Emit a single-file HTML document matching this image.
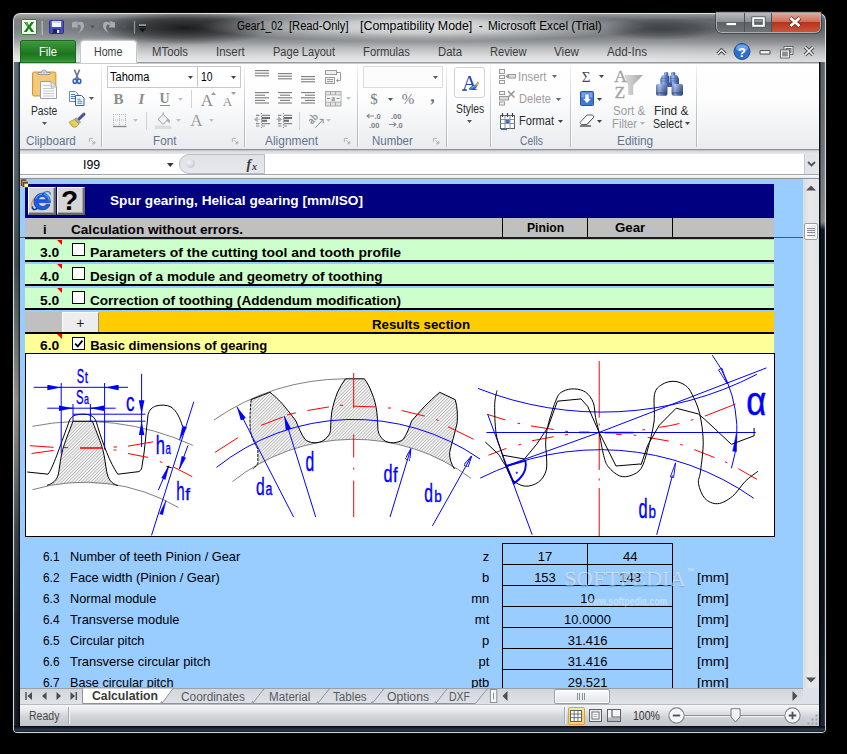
<!DOCTYPE html>
<html>
<head>
<meta charset="utf-8">
<title>Gear1_02 - Microsoft Excel</title>
<style>
*{box-sizing:border-box;margin:0;padding:0}
html,body{width:847px;height:754px;background:#000;overflow:hidden}
body{font-family:"Liberation Sans",sans-serif;font-size:12px;color:#000;position:relative}
.abs{position:absolute}
.t{position:absolute;white-space:pre;line-height:1;transform-origin:0 50%}
svg{position:absolute;overflow:visible}
</style>
</head>
<body>

<div class="abs" style="left:13px;top:13px;width:813px;height:720px;border-radius:7px 7px 4px 4px;
 background:
  radial-gradient(ellipse 225px 15px at 410px 13.5px, rgba(255,255,255,.82) 0%, rgba(255,255,255,.62) 45%, rgba(255,255,255,0) 100%),
  radial-gradient(ellipse 88px 17px at 172px 15px, rgba(0,0,0,.74) 0%, rgba(0,0,0,.42) 55%, rgba(0,0,0,0) 100%),
  radial-gradient(ellipse 62px 11px at 648px 16px, rgba(20,24,28,.5) 0%, rgba(20,24,28,.28) 60%, rgba(0,0,0,0) 100%),
  linear-gradient(to right, rgba(255,255,255,.16) 0px, rgba(255,255,255,.12) 60px, rgba(255,255,255,0) 125px, rgba(0,0,0,0) 600px, rgba(0,0,0,.06) 813px),
  linear-gradient(to bottom, #a4a8aa 0px, #858a8e 3px, #666b70 7px, #676c70 16px, #7d8184 24px, #94979a 29px, #b9bbbd 35px, #d6d7d9 42px, #eaeaeb 49px, #46494c 50px, #1c1e20 100%);
 box-shadow: inset 0 0 0 1px rgba(235,240,242,.85), 0 0 0 1px #0c0c0c;"></div>
<div class="abs" style="left:14px;top:62px;width:6px;height:665px;background:
      linear-gradient(to right, rgba(255,255,255,.12) 0, rgba(0,0,0,0) 2px, rgba(0,0,0,0) 4px, rgba(0,0,0,.55) 5px, rgba(0,0,0,.7) 6px),
      linear-gradient(to bottom,#54686f 0px,#4a5d64 120px,#3a484e 200px,#6d7574 290px,#8f8d86 340px,#6e7070 400px,#384246 470px,#1b2024 560px,#14181c 665px);"></div>
<div class="abs" style="left:819px;top:62px;width:6px;height:665px;background:
      linear-gradient(to right, rgba(0,0,0,.85) 0, rgba(0,0,0,.85) 1.2px, rgba(0,0,0,0) 1.8px, rgba(0,0,0,0) 5px, rgba(255,255,255,.25) 6px),
      linear-gradient(to bottom,#5c6168 0px,#6f747a 100px,#80858a 160px,#0b1220 168px,#0a101a 560px,#1a2636 665px);"></div>
<div class="abs" style="left:14px;top:726px;width:811px;height:6px;border-radius:0 0 3px 3px;background:
      linear-gradient(to bottom,#05070a 0,#18222e 2px,#2a3a4c 4px,#141c26 6px);"></div>
<div class="t" style="left:236.80px;top:19.84px;font-size:12px;color:#000;transform:scaleX(0.8546);">Gear1_02</div>
<div class="t" style="left:289.20px;top:19.84px;font-size:12px;color:#000;transform:scaleX(0.9295);">[Read-Only]</div>
<div class="t" style="left:360.10px;top:19.84px;font-size:12px;color:#000;transform:scaleX(1.0331);">[Compatibility Mode]</div>
<div class="t" style="left:488.30px;top:19.84px;font-size:12px;color:#000;transform:scaleX(0.9838);">Microsoft Excel (Trial)</div>
<div class="t" style="left:478.80px;top:19.84px;font-size:12px;color:#000;">-</div>
<svg style="left:21px;top:19px" width="16" height="16" viewBox="0 0 16 16">
<rect x="0.5" y="0.5" width="15" height="15" rx="1.5" fill="#eef5ea" stroke="#3b7a3b"/>
<rect x="1.5" y="1.5" width="13" height="13" fill="none" stroke="#fff" stroke-opacity=".7"/>
<path d="M3 3 L6 3 L8 6.3 L10.2 3 L13 3 L9.6 8 L13.2 13 L10.2 13 L8 9.6 L5.8 13 L2.8 13 L6.4 8 Z" fill="#1e7b1e"/>
<path d="M3 3 L6 3 L8 6.3 L6.4 8 Z" fill="#4aa84a"/>
</svg>
<div class="abs" style="left:41px;top:21px;width:1px;height:14px;background:#9aa0a4;"></div>
<div class="abs" style="left:42px;top:21px;width:1px;height:14px;background:rgba(255,255,255,.35);"></div>
<svg style="left:48.6px;top:20.2px" width="15" height="14" viewBox="0 0 16 15">
<rect x="0.5" y="0.5" width="15" height="14" rx="1" fill="#4a50b8" stroke="#2a2f86"/>
<rect x="3" y="1" width="10" height="6.5" fill="#f4f6fb"/>
<rect x="3" y="1" width="10" height="2" fill="#c9d0ea"/>
<rect x="4" y="9.5" width="8" height="5" fill="#20245c"/>
<rect x="8.5" y="10.5" width="2.5" height="3.5" fill="#dfe3f5"/>
</svg>
<svg style="left:71px;top:19px" width="80" height="18" viewBox="0 0 80 18">
<g fill="#a9adb0">
<path d="M1 3.4 L6.6 2 L5.2 5 C 7 2.2, 12.6 1.6, 13 6.6 C 13.2 9.6, 10.6 12.4, 7.4 14 C 9.6 11.4, 10.4 9, 9.6 6.8 C 8.8 5, 7.2 5.2, 6.2 6.4 L 7.4 8.4 L 1 8.6 Z"/>
<path d="M44 3.4 L38.4 2 L39.8 5 C 38 2.2, 32.4 1.6, 32 6.6 C 31.8 9.6, 34.4 12.4, 37.6 14 C 35.4 11.4, 34.6 9, 35.4 6.8 C 36.2 5, 37.8 5.2, 38.8 6.4 L 37.6 8.4 L 44 8.6 Z"/>
</g>
<path d="M18.6 6.4 L24.2 6.4 L21.4 9.6 Z" fill="#53585c"/>
<path d="M50.6 6.4 L56.2 6.4 L53.4 9.6 Z" fill="#53585c"/>
<rect x="62.4" y="1.6" width="2.2" height="13.6" rx="1" fill="#8d9296" stroke="#3e4347" stroke-width=".8"/>
<rect x="68" y="5.6" width="7" height="1.2" fill="#e6e8ea"/><rect x="68" y="6.8" width="7" height="1.3" fill="#0c0e10"/>
<path d="M68 9.4 H75 L71.5 12.9 Z" fill="#0c0e10"/>
</svg>
<div class="abs" style="left:717px;top:13px;width:103px;height:19px;border-radius:0 0 5px 5px;box-shadow:0 0 0 1px rgba(255,255,255,.55), 0 0 0 2px rgba(40,44,48,.55);overflow:hidden">
<div class="abs" style="left:0;top:0;width:28px;height:19px;background:linear-gradient(to bottom,#b9bcbf 0,#8f9397 45%,#5d6266 50%,#6e7377 100%);border-right:1px solid #4d5155"></div>
<div class="abs" style="left:28px;top:0;width:27px;height:19px;background:linear-gradient(to bottom,#b9bcbf 0,#8f9397 45%,#5d6266 50%,#6e7377 100%);border-right:1px solid #4d5155"></div>
<div class="abs" style="left:55px;top:0;width:48px;height:19px;background:linear-gradient(to bottom,#e3a99c 0,#d0705c 45%,#b8331a 50%,#c9553a 100%)"></div>
</div>
<svg style="left:717px;top:13px" width="103" height="19" viewBox="0 0 103 19">
<rect x="9" y="9.5" width="10.5" height="3.2" fill="#fff" stroke="#53575b" stroke-width=".8"/>
<rect x="36.2" y="5.2" width="10.6" height="7.6" fill="none" stroke="#53575b" stroke-width="3.6"/>
<rect x="36.2" y="5.2" width="10.6" height="7.6" fill="none" stroke="#fff" stroke-width="2"/>
<g stroke-linecap="butt"><path d="M73.2 4.8 L82.8 13.2 M82.8 4.8 L73.2 13.2" stroke="#6b2a1c" stroke-width="4.4"/>
<path d="M73.5 5 L82.5 13 M82.5 5 L73.5 13" stroke="#fff" stroke-width="2.8"/></g>
</svg>
<div class="abs" style="left:20px;top:40px;width:56px;height:23px;border-radius:3px 3px 0 0;
      background:linear-gradient(to bottom,#3f9a3f 0,#2f8a2f 30%,#1f741f 60%,#2c8a2c 85%,#4aa84a 100%);
      box-shadow:inset 0 0 0 1px #1b6a1b, inset 0 2px 1px -1px rgba(255,255,255,.45)"></div>
<div class="t" style="left:39.20px;top:45.84px;font-size:12px;color:#fff;transform:scaleX(0.9305);">File</div>
<div class="abs" style="left:81px;top:41px;width:55px;height:22px;border-radius:3px 3px 0 0;background:linear-gradient(to bottom,#fdfdfd,#fff);
      box-shadow:0 0 0 1px #c3c6ca, 0 0 4px rgba(255,255,255,.8)"></div>
<div class="t" style="left:93.80px;top:45.84px;font-size:12px;color:#3c3c3c;transform:scaleX(0.8871);">Home</div>
<div class="t" style="left:151.70px;top:45.84px;font-size:12px;color:#3c3c3c;transform:scaleX(0.9470);">MTools</div>
<div class="t" style="left:215.80px;top:45.84px;font-size:12px;color:#3c3c3c;transform:scaleX(0.9567);">Insert</div>
<div class="t" style="left:273.00px;top:45.84px;font-size:12px;color:#3c3c3c;transform:scaleX(0.9204);">Page Layout</div>
<div class="t" style="left:363.00px;top:45.84px;font-size:12px;color:#3c3c3c;transform:scaleX(0.9397);">Formulas</div>
<div class="t" style="left:438.00px;top:45.84px;font-size:12px;color:#3c3c3c;transform:scaleX(0.9470);">Data</div>
<div class="t" style="left:490.00px;top:45.84px;font-size:12px;color:#3c3c3c;transform:scaleX(0.9274);">Review</div>
<div class="t" style="left:554.00px;top:45.84px;font-size:12px;color:#3c3c3c;transform:scaleX(0.9691);">View</div>
<div class="t" style="left:607.00px;top:45.84px;font-size:12px;color:#3c3c3c;transform:scaleX(0.9675);">Add-Ins</div>
<svg style="left:714px;top:42px" width="106" height="20" viewBox="0 0 106 20">
<path d="M3.5 12 L7.5 8 L11.5 12" fill="none" stroke="#3a3d40" stroke-width="3.2"/>
<path d="M3.5 12 L7.5 8 L11.5 12" fill="none" stroke="#f4f4f4" stroke-width="1.4"/>
<circle cx="28" cy="9.5" r="8" fill="#2f6fc9" stroke="#1d4f9c" stroke-width="1"/>
<ellipse cx="28" cy="6" rx="6" ry="3.6" fill="#7fb0ee" opacity=".75"/>
<path d="M46 8.6 h10 v3.4 h-10 z" fill="#f4f4f4" stroke="#4b4f53" stroke-width="1"/>
<rect x="71" y="5.5" width="7" height="6" fill="none" stroke="#4b4f53" stroke-width="2.8"/>
<rect x="71" y="5.5" width="7" height="6" fill="none" stroke="#f4f4f4" stroke-width="1.2"/>
<rect x="67.5" y="9" width="7" height="6" fill="#999" stroke="#4b4f53" stroke-width="2.8"/>
<rect x="67.5" y="9" width="7" height="6" fill="#8a8d90" stroke="#f4f4f4" stroke-width="1.2"/>
<path d="M91 5 L99 13 M99 5 L91 13" stroke="#4b4f53" stroke-width="3.6"/>
<path d="M91 5 L99 13 M99 5 L91 13" stroke="#f4f4f4" stroke-width="1.7"/>
</svg>
<div class="t" style="left:738.03px;top:46.00px;font-size:13px;color:#fff;font-weight:bold;">?</div>
<div class="abs" style="left:20px;top:63px;width:799px;height:87px;background:linear-gradient(to bottom,#ffffff 0,#fdfdfe 40%,#f1f3f5 75%,#e9ebee 100%);border-bottom:1px solid #8e9297;border-top:1px solid #c9ccd0"></div>
<div class="abs" style="left:20px;top:150px;width:799px;height:4px;background:linear-gradient(to bottom,#b8bbbf,#d9dbde 40%,#e6e8eb);"></div>
<div class="abs" style="left:101px;top:66px;width:1px;height:81px;background:linear-gradient(to bottom,rgba(190,194,200,.2),#c4c8ce 50%,#b4b8be);"></div>
<div class="abs" style="left:102px;top:66px;width:1px;height:81px;background:rgba(255,255,255,.9);"></div>
<div class="abs" style="left:244px;top:66px;width:1px;height:81px;background:linear-gradient(to bottom,rgba(190,194,200,.2),#c4c8ce 50%,#b4b8be);"></div>
<div class="abs" style="left:245px;top:66px;width:1px;height:81px;background:rgba(255,255,255,.9);"></div>
<div class="abs" style="left:357px;top:66px;width:1px;height:81px;background:linear-gradient(to bottom,rgba(190,194,200,.2),#c4c8ce 50%,#b4b8be);"></div>
<div class="abs" style="left:358px;top:66px;width:1px;height:81px;background:rgba(255,255,255,.9);"></div>
<div class="abs" style="left:446px;top:66px;width:1px;height:81px;background:linear-gradient(to bottom,rgba(190,194,200,.2),#c4c8ce 50%,#b4b8be);"></div>
<div class="abs" style="left:447px;top:66px;width:1px;height:81px;background:rgba(255,255,255,.9);"></div>
<div class="abs" style="left:490px;top:66px;width:1px;height:81px;background:linear-gradient(to bottom,rgba(190,194,200,.2),#c4c8ce 50%,#b4b8be);"></div>
<div class="abs" style="left:491px;top:66px;width:1px;height:81px;background:rgba(255,255,255,.9);"></div>
<div class="abs" style="left:570px;top:66px;width:1px;height:81px;background:linear-gradient(to bottom,rgba(190,194,200,.2),#c4c8ce 50%,#b4b8be);"></div>
<div class="abs" style="left:571px;top:66px;width:1px;height:81px;background:rgba(255,255,255,.9);"></div>
<div class="abs" style="left:696px;top:66px;width:1px;height:81px;background:linear-gradient(to bottom,rgba(190,194,200,.2),#c4c8ce 50%,#b4b8be);"></div>
<div class="abs" style="left:697px;top:66px;width:1px;height:81px;background:rgba(255,255,255,.9);"></div>
<div class="t" style="left:25.70px;top:134.84px;font-size:12px;color:#66728c;transform:scaleX(0.9693);">Clipboard</div>
<div class="t" style="left:152.60px;top:134.84px;font-size:12px;color:#66728c;transform:scaleX(0.9750);">Font</div>
<div class="t" style="left:265.00px;top:134.84px;font-size:12px;color:#66728c;transform:scaleX(0.9933);">Alignment</div>
<div class="t" style="left:372.35px;top:134.84px;font-size:12px;color:#66728c;transform:scaleX(0.9534);">Number</div>
<div class="t" style="left:519.80px;top:134.84px;font-size:12px;color:#66728c;transform:scaleX(0.8618);">Cells</div>
<div class="t" style="left:616.50px;top:134.84px;font-size:12px;color:#66728c;transform:scaleX(0.9867);">Editing</div>
<svg style="left:89.4px;top:138.3px" width="6.6" height="6.6" viewBox="0 0 8 8"><path d="M0.5 5 V0.5 H5" fill="none" stroke="#a8acb2"/><path d="M3 3 L7 7 M7 3.8 V7 H3.8" fill="none" stroke="#a8acb2" stroke-width="1.1"/></svg>
<svg style="left:232.4px;top:138.3px" width="6.6" height="6.6" viewBox="0 0 8 8"><path d="M0.5 5 V0.5 H5" fill="none" stroke="#a8acb2"/><path d="M3 3 L7 7 M7 3.8 V7 H3.8" fill="none" stroke="#a8acb2" stroke-width="1.1"/></svg>
<svg style="left:344.4px;top:138.3px" width="6.6" height="6.6" viewBox="0 0 8 8"><path d="M0.5 5 V0.5 H5" fill="none" stroke="#a8acb2"/><path d="M3 3 L7 7 M7 3.8 V7 H3.8" fill="none" stroke="#a8acb2" stroke-width="1.1"/></svg>
<svg style="left:433.4px;top:138.3px" width="6.6" height="6.6" viewBox="0 0 8 8"><path d="M0.5 5 V0.5 H5" fill="none" stroke="#a8acb2"/><path d="M3 3 L7 7 M7 3.8 V7 H3.8" fill="none" stroke="#a8acb2" stroke-width="1.1"/></svg>
<svg style="left:31px;top:69px" width="30" height="32" viewBox="0 0 30 32">
<rect x="1.5" y="3" width="23.4" height="24" rx="1.5" fill="#f0c266" stroke="#c99a3c"/>
<rect x="3" y="4.5" width="20.4" height="21" fill="#f6cf80" opacity=".6"/>
<path d="M7 5.5 V3.5 H10.4 C10.4 0.3 15.6 0.3 15.6 3.5 H19 V5.5 Z" fill="#d8dbe0" stroke="#8d9096" stroke-width=".8"/>
<circle cx="13" cy="2.6" r="1" fill="#fff" stroke="#8d9096" stroke-width=".5"/>
<path d="M9.5 12.5 H20 L25.5 18 V29.5 H9.5 Z" fill="#fdfdfe" stroke="#9aa0aa"/>
<path d="M20 12.5 V18 H25.5" fill="#e3e6ec" stroke="#9aa0aa" stroke-width=".8"/>
<g stroke="#c5c9d2" stroke-width="1"><path d="M12 16.5 H19 M12 19.5 H23 M12 22 H23 M12 24.5 H23 M12 27 H23"/></g>
</svg>
<div class="t" style="left:31.35px;top:104.84px;font-size:12px;color:#2d2d2d;transform:scaleX(0.8575);">Paste</div>
<svg style="left:42.0px;top:121.7px" width="5.0" height="3.0" viewBox="0 0 5 3"><path d="M0 0 H5 L2.5 3 Z" fill="#555"/></svg>
<svg style="left:71px;top:69px" width="12" height="16" viewBox="0 0 12 16">
<path d="M3.4 0.6 L7.4 10.4 M8.6 0.6 L4.6 10.4" stroke="#6a7687" stroke-width="1.5" fill="none"/>
<ellipse cx="3.9" cy="12.2" rx="1.7" ry="2.2" fill="none" stroke="#2e62c4" stroke-width="1.6"/>
<ellipse cx="8.1" cy="12.2" rx="1.7" ry="2.2" fill="none" stroke="#2e62c4" stroke-width="1.6"/>
</svg>
<svg style="left:69px;top:91px" width="16" height="15" viewBox="0 0 16 15">
<path d="M0.5 0.5 H6.5 L9 3 V10.5 H0.5 Z" fill="#f4f7fc" stroke="#6b86b8"/>
<path d="M2 3.5 H6 M2 5.5 H7.5 M2 7.5 H7.5" stroke="#4d78c4" stroke-width="1"/>
<path d="M6.5 4.5 H12.5 L15 7 V14.5 H6.5 Z" fill="#f4f7fc" stroke="#365ea8"/>
<path d="M8.4 8.2 H11.6 M8.4 10.2 H13.2 M8.4 12.2 H13.2" stroke="#2f62c0" stroke-width=".8"/>
</svg>
<svg style="left:89.0px;top:96.5px" width="5.0" height="3.0" viewBox="0 0 5 3"><path d="M0 0 H5 L2.5 3 Z" fill="#555"/></svg>
<svg style="left:68px;top:113px" width="18" height="16" viewBox="0 0 18 16">
<path d="M11 6 L16 1.2" stroke="#4b4fa0" stroke-width="3" stroke-linecap="round"/>
<path d="M8.2 4.8 L12.6 9 L10.8 10.8 L6.4 6.6 Z" fill="#a9adb6" stroke="#6f7480" stroke-width=".6"/>
<path d="M6.2 6.4 L11 11 C 9 14, 6.5 15, 4.5 13.5 L 1 9.2 Z" fill="#eccf62" stroke="#a88b2e" stroke-width=".8"/>
<path d="M3 10.5 L6 13.5" stroke="#c9a93e" stroke-width=".8"/>
</svg>
<div class="abs" style="left:107px;top:66px;width:134px;height:22px;background:#fff;border:1px solid #c6c9ce"></div>
<div class="abs" style="left:197px;top:67px;width:1px;height:20px;background:#c6c9ce;"></div>
<div class="t" style="left:110.30px;top:70.84px;font-size:12px;color:#000;transform:scaleX(0.9206);">Tahoma</div>
<div class="t" style="left:201.30px;top:70.84px;font-size:12px;color:#000;transform:scaleX(0.8618);">10</div>
<svg style="left:188.0px;top:75.5px" width="5.0" height="3.0" viewBox="0 0 5 3"><path d="M0 0 H5 L2.5 3 Z" fill="#444"/></svg>
<svg style="left:231.0px;top:75.5px" width="5.0" height="3.0" viewBox="0 0 5 3"><path d="M0 0 H5 L2.5 3 Z" fill="#444"/></svg>
<div class="t" style="left:113.50px;top:91.51px;font-size:15px;color:#8c8c8c;font-weight:bold;font-family:'Liberation Serif',serif;">B</div>
<div class="t" style="left:138.58px;top:91.51px;font-size:15px;color:#8c8c8c;font-weight:bold;font-style:italic;font-family:'Liberation Serif',serif;">I</div>
<div class="t" style="left:159.45px;top:92.34px;font-size:14px;color:#8c8c8c;font-weight:bold;font-family:'Liberation Serif',serif;">U</div>
<div class="abs" style="left:160px;top:105px;width:9.5px;height:1px;background:#8c8c8c;"></div>
<svg style="left:178.0px;top:97.5px" width="5.0" height="3.0" viewBox="0 0 5 3"><path d="M0 0 H5 L2.5 3 Z" fill="#c2c2c2"/></svg>
<div class="abs" style="left:191px;top:90px;width:1px;height:18px;background:#d0d3d8;"></div>
<div class="t" style="left:200.86px;top:91.85px;font-size:17px;color:#8c8c8c;font-family:'Liberation Serif',serif;">A</div>
<svg style="left:210.5px;top:92px" width="5" height="3" viewBox="0 0 5 3"><path d="M0 3 H5 L2.5 0 Z" fill="#9a9a9a"/></svg>
<div class="t" style="left:222.80px;top:95.18px;font-size:13px;color:#8c8c8c;font-family:'Liberation Serif',serif;">A</div>
<svg style="left:231.0px;top:92.0px" width="5.0" height="3.0" viewBox="0 0 5 3"><path d="M0 0 H5 L2.5 3 Z" fill="#9a9a9a"/></svg>
<svg style="left:113px;top:113px" width="14" height="15" viewBox="0 0 14 15">
<g stroke="#b4b4b4" stroke-width="1" stroke-dasharray="1 1"><path d="M0.5 1 V13 M6.5 1 V13 M12.5 1 V13 M0 1.5 H13 M0 7 H13"/></g>
<path d="M0 13.5 H13.5" stroke="#8c8c8c" stroke-width="1.4"/></svg>
<svg style="left:133.0px;top:119.0px" width="5.0" height="3.0" viewBox="0 0 5 3"><path d="M0 0 H5 L2.5 3 Z" fill="#c2c2c2"/></svg>
<div class="abs" style="left:146px;top:112px;width:1px;height:18px;background:#d0d3d8;"></div>
<svg style="left:155px;top:112px" width="17" height="17" viewBox="0 0 17 17">
<path d="M3 7.5 L8.2 2.4 L13.2 7.4 L8 12.4 Z" fill="#f2f2f2" stroke="#9a9a9a" stroke-width="1"/>
<path d="M8.2 2.4 V0.6" stroke="#9a9a9a" stroke-width="1.2"/>
<path d="M12.6 6.8 C 15 7.2, 15.5 9.5, 14.2 11.5 C 13.5 9.8, 13 9, 11.2 8.4 Z" fill="#a8a8a8"/>
<rect x="0" y="13.6" width="16.5" height="3.4" fill="#dcdcdc"/></svg>
<svg style="left:176.0px;top:119.0px" width="5.0" height="3.0" viewBox="0 0 5 3"><path d="M0 0 H5 L2.5 3 Z" fill="#c2c2c2"/></svg>
<div class="t" style="left:190.36px;top:111.85px;font-size:17px;color:#9a9a9a;font-family:'Liberation Serif',serif;">A</div>
<svg style="left:209.0px;top:119.0px" width="5.0" height="3.0" viewBox="0 0 5 3"><path d="M0 0 H5 L2.5 3 Z" fill="#c2c2c2"/></svg>
<svg style="left:255px;top:70px" width="15" height="10" viewBox="0 0 15 10"><g stroke="#7a7a7a" stroke-width="1.1"><path d="M0.0 0.6 H14.0"/><path d="M0.0 3.2 H14.0"/><path d="M0.0 5.8 H14.0"/></g></svg>
<svg style="left:278px;top:73px" width="15" height="10" viewBox="0 0 15 10"><g stroke="#7a7a7a" stroke-width="1.1"><path d="M0.0 0.6 H14.0"/><path d="M0.0 3.2 H14.0"/><path d="M0.0 5.8 H14.0"/></g></svg>
<svg style="left:301px;top:76px" width="15" height="10" viewBox="0 0 15 10"><g stroke="#7a7a7a" stroke-width="1.1"><path d="M0.0 0.6 H14.0"/><path d="M0.0 3.2 H14.0"/><path d="M0.0 5.8 H14.0"/></g></svg>
<svg style="left:325px;top:69px" width="17" height="16" viewBox="0 0 17 16">
<rect x="0.5" y="1.5" width="11" height="4" fill="#f0f0f0" stroke="#9a9a9a"/>
<rect x="0.5" y="8.5" width="9" height="6" fill="#f0f0f0" stroke="#9a9a9a"/>
<path d="M2 10.5 H8 M2 12.5 H8" stroke="#9a9a9a"/>
<path d="M12 3.5 H15.5 V11.5 H11.5 M13.2 9.8 L11.4 11.5 L13.2 13.2" fill="none" stroke="#9a9a9a"/></svg>
<svg style="left:255px;top:92px" width="15" height="15" viewBox="0 0 15 15"><g stroke="#7a7a7a" stroke-width="1.1"><path d="M0.0 0.6 H14.0"/><path d="M0.0 3.2 H10.0"/><path d="M0.0 5.8 H14.0"/><path d="M0.0 8.4 H10.0"/><path d="M0.0 11.0 H14.0"/></g></svg>
<svg style="left:278px;top:92px" width="15" height="15" viewBox="0 0 15 15"><g stroke="#7a7a7a" stroke-width="1.1"><path d="M0.0 0.6 H14.0"/><path d="M2.0 3.2 H12.0"/><path d="M0.0 5.8 H14.0"/><path d="M2.0 8.4 H12.0"/><path d="M0.0 11.0 H14.0"/></g></svg>
<svg style="left:301px;top:92px" width="15" height="15" viewBox="0 0 15 15"><g stroke="#7a7a7a" stroke-width="1.1"><path d="M0.0 0.6 H14.0"/><path d="M4.0 3.2 H14.0"/><path d="M0.0 5.8 H14.0"/><path d="M4.0 8.4 H14.0"/><path d="M0.0 11.0 H14.0"/></g></svg>
<svg style="left:325px;top:91px" width="17" height="16" viewBox="0 0 17 16">
<rect x="0.5" y="0.5" width="15.5" height="14.5" fill="#e2e2e2" stroke="#a8a8a8"/>
<path d="M0.5 4 H16 M0.5 11 H16 M5.5 0.5 V4 M10.5 0.5 V4 M5.5 11 V15 M10.5 11 V15" stroke="#a8a8a8"/>
<rect x="1" y="4.5" width="14.5" height="6" fill="#f6f6f6"/>
<path d="M2 7.5 H5 M11.5 7.5 H14.5" stroke="#8a8a8a"/>
<text x="8.2" y="10" font-size="7.5" font-family="Liberation Serif" font-weight="bold" fill="#8a8a8a" text-anchor="middle">a</text></svg>
<svg style="left:346.0px;top:97.0px" width="5.0" height="3.0" viewBox="0 0 5 3"><path d="M0 0 H5 L2.5 3 Z" fill="#c2c2c2"/></svg>
<svg style="left:254px;top:113px" width="17" height="15" viewBox="0 0 17 15"><g stroke="#8a8a8a" stroke-width="1.1"><path d="M2 2.4 H5.4 M8 2.4 H16 M2 10.6 H5.4 M8 10.6 H16 M2 13 H5.4 M8 13 H11"/></g><path d="M7.6 5 H16 M7.6 7.8 H13" stroke="#6e6e6e" stroke-width="1.9"/><path d="M7.4 0 V15" stroke="#7a7a7a" stroke-width="1" stroke-dasharray="1.2 1.6"/><path d="M3 6.4 H5.8 M3.4 4 L0.4 6.4 L3.4 8.8 Z" fill="#b4b4b4" stroke="#b4b4b4" stroke-width="1"/></svg>
<svg style="left:276px;top:113px" width="17" height="15" viewBox="0 0 17 15"><g stroke="#8a8a8a" stroke-width="1.1"><path d="M2 2.4 H5.4 M8 2.4 H16 M2 10.6 H5.4 M8 10.6 H16 M2 13 H5.4 M8 13 H11"/></g><path d="M7.6 5 H16 M7.6 7.8 H13" stroke="#6e6e6e" stroke-width="1.9"/><path d="M7.4 0 V15" stroke="#7a7a7a" stroke-width="1" stroke-dasharray="1.2 1.6"/><path d="M0.4 6.4 H3 M2.6 4 L5.6 6.4 L2.6 8.8 Z" fill="#a8a8a8" stroke="#a8a8a8" stroke-width="1"/></svg>
<div class="abs" style="left:299px;top:112px;width:1px;height:18px;background:#d0d3d8;"></div>
<svg style="left:306px;top:110px" width="20" height="20" viewBox="0 0 20 20">
<text transform="translate(5.8,14.4) rotate(-45)" font-size="10.5" font-family="Liberation Serif" fill="#8a8a8a" stroke="#8a8a8a" stroke-width=".25">ab</text>
<path d="M9.4 17.7 L17 9.6 M13.6 9.4 H17.2 V13" fill="none" stroke="#8a8a8a" stroke-width="1"/></svg>
<svg style="left:326.1px;top:118.9px" width="5.0" height="3.0" viewBox="0 0 5 3"><path d="M0 0 H5 L2.5 3 Z" fill="#c2c2c2"/></svg>
<div class="abs" style="left:363px;top:66px;width:80px;height:22px;background:#fcfcfc;border:1px solid #dadcdf"></div>
<svg style="left:432.5px;top:75.5px" width="5.0" height="3.0" viewBox="0 0 5 3"><path d="M0 0 H5 L2.5 3 Z" fill="#555"/></svg>
<div class="t" style="left:370.25px;top:91.51px;font-size:15px;color:#7a7a7a;font-family:'Liberation Serif',serif;">$</div>
<svg style="left:387.5px;top:97.5px" width="5.0" height="3.0" viewBox="0 0 5 3"><path d="M0 0 H5 L2.5 3 Z" fill="#555"/></svg>
<div class="t" style="left:401.75px;top:91.51px;font-size:15px;color:#7a7a7a;font-family:'Liberation Serif',serif;">%</div>
<div class="t" style="left:430.25px;top:87.02px;font-size:18px;color:#7a7a7a;font-weight:bold;font-family:'Liberation Serif',serif;">,</div>
<svg style="left:366px;top:112px" width="40" height="17" viewBox="0 0 40 17">
<g font-family="Liberation Sans" font-size="7.5" fill="#7f7f7f" font-weight="bold">
<text x="8.5" y="7">.0</text><text x="3" y="15.5">.00</text>
<text x="25" y="7">.00</text><text x="30.5" y="15.5">.0</text></g>
<path d="M1 4 H8 M3.5 1.8 L1 4 L3.5 6.2" fill="none" stroke="#8a8a8a" stroke-width="1.1"/>
<path d="M23 12.5 H30 M27.5 10.3 L30 12.5 L27.5 14.7" fill="none" stroke="#8a8a8a" stroke-width="1.1"/>
</svg>
<div class="abs" style="left:454px;top:67px;width:31px;height:31px;background:#fff;border:1px solid #cfd2d6;border-radius:3px"></div>
<svg style="left:460px;top:73px" width="20" height="20" viewBox="0 0 20 20">
<text x="2" y="17.2" font-size="21" font-family="Liberation Serif" fill="#2448a8">A</text>
<path d="M2 17.3 H7" stroke="#2448a8" stroke-width="1"/>
<path d="M9 16.2 C 11 12.8, 14.5 11.6, 17 12.4 C 16.6 15, 13.4 17.6, 9 16.2 Z" fill="#3d6fd0" stroke="#1e3f98" stroke-width=".6"/>
<path d="M11 15.4 C 12.4 13.6, 14 13, 15.6 13.2" fill="none" stroke="#a8c6f4" stroke-width=".8"/>
<path d="M15.4 12.2 L18 8.6 L18.6 10.6 L17 12.8 Z" fill="#e9b030" stroke="#8a6414" stroke-width=".4"/></svg>
<div class="t" style="left:455.50px;top:102.84px;font-size:12px;color:#2d2d2d;transform:scaleX(0.8631);">Styles</div>
<svg style="left:467.0px;top:120.0px" width="5.0" height="3.0" viewBox="0 0 5 3"><path d="M0 0 H5 L2.5 3 Z" fill="#555"/></svg>
<svg style="left:499px;top:68px" width="17" height="16" viewBox="0 0 17 16">
<rect x="0.5" y="1.5" width="5" height="4" fill="#f4f4f4" stroke="#9a9a9a"/><rect x="0.5" y="7.5" width="5" height="3" fill="#f4f4f4" stroke="#9a9a9a"/><rect x="0.5" y="12.5" width="5" height="3" fill="#f4f4f4" stroke="#9a9a9a"/>
<rect x="9.5" y="6.5" width="7" height="3.5" fill="#dcdcdc" stroke="#9a9a9a"/><path d="M6.5 8.2 L9 6 V10.4 Z" fill="#9a9a9a"/></svg>
<div class="t" style="left:518.00px;top:70.84px;font-size:12px;color:#9c9c9c;transform:scaleX(0.9500);">Insert</div>
<svg style="left:551.5px;top:75.3px" width="5.0" height="3.0" viewBox="0 0 5 3"><path d="M0 0 H5 L2.5 3 Z" fill="#666"/></svg>
<svg style="left:499px;top:90px" width="17" height="16" viewBox="0 0 17 16">
<rect x="0.5" y="1.5" width="5" height="3" fill="#f4f4f4" stroke="#9a9a9a"/><rect x="0.5" y="6.5" width="9" height="3.5" fill="#dcdcdc" stroke="#9a9a9a"/><rect x="0.5" y="12" width="5" height="3" fill="#f4f4f4" stroke="#9a9a9a"/>
<path d="M9 1 L15.5 7.5 M15.5 1 L9 7.5" stroke="#9a9a9a" stroke-width="1.6"/></svg>
<div class="t" style="left:518.60px;top:92.84px;font-size:12px;color:#9c9c9c;transform:scaleX(0.9225);">Delete</div>
<svg style="left:555.5px;top:97.7px" width="5.0" height="3.0" viewBox="0 0 5 3"><path d="M0 0 H5 L2.5 3 Z" fill="#666"/></svg>
<svg style="left:499px;top:113px" width="17" height="17" viewBox="0 0 17 17">
<rect x="1.5" y="2.5" width="14" height="13" fill="#fff" stroke="#5a5f68"/>
<path d="M1.5 6.5 H15.5 M1.5 10.5 H15.5 M6 2.5 V15.5 M11 2.5 V15.5" stroke="#8b909a"/>
<rect x="6.5" y="7" width="4" height="3" fill="#3a6fd0"/>
<path d="M3.5 0 V4 M8.5 0 V4 M13.5 0 V4" stroke="#3c3f46" stroke-width="1.2"/>
<path d="M2 16.5 H8" stroke="#3a6fd0" stroke-width="1.2"/></svg>
<div class="t" style="left:518.60px;top:114.84px;font-size:12px;color:#2d2d2d;transform:scaleX(0.9211);">Format</div>
<svg style="left:558.0px;top:119.9px" width="5.0" height="3.0" viewBox="0 0 5 3"><path d="M0 0 H5 L2.5 3 Z" fill="#444"/></svg>
<div class="t" style="left:581.63px;top:69.51px;font-size:15px;color:#4a4a4a;font-family:'Liberation Serif',serif;">Σ</div>
<svg style="left:599.0px;top:75.3px" width="5.0" height="3.0" viewBox="0 0 5 3"><path d="M0 0 H5 L2.5 3 Z" fill="#444"/></svg>
<svg style="left:580px;top:91px" width="14" height="15" viewBox="0 0 14 15">
<rect x="0.5" y="0.5" width="13" height="14" rx="1" fill="#3e78d6" stroke="#2453a6"/>
<rect x="1.5" y="1.5" width="11" height="5" fill="#8cb6f2" opacity=".7"/>
<path d="M5 3 H9 V7.5 H11.5 L7 12.5 L2.5 7.5 H5 Z" fill="#fff" stroke="#2453a6" stroke-width=".5"/></svg>
<svg style="left:597.0px;top:97.5px" width="5.0" height="3.0" viewBox="0 0 5 3"><path d="M0 0 H5 L2.5 3 Z" fill="#444"/></svg>
<svg style="left:579px;top:113px" width="16" height="14" viewBox="0 0 16 14">
<path d="M1 9.5 L8 2 H13.5 L15 4 L8 11.5 H2.5 Z" fill="#fdfdfd" stroke="#555b66" stroke-width="1"/>
<path d="M8 11.5 L9.5 9.5 L15 4" fill="none" stroke="#555b66" stroke-width=".8"/>
<path d="M1 13 H12" stroke="#3c3f46" stroke-width="1.3"/></svg>
<svg style="left:597.0px;top:119.5px" width="5.0" height="3.0" viewBox="0 0 5 3"><path d="M0 0 H5 L2.5 3 Z" fill="#444"/></svg>
<svg style="left:613px;top:69px" width="31" height="30" viewBox="0 0 31 30">
<defs><linearGradient id="fn" x1="0" x2="1"><stop offset="0" stop-color="#d9d9d9"/><stop offset=".5" stop-color="#c4c4c4"/><stop offset="1" stop-color="#a4a4a4"/></linearGradient></defs>
<path d="M11 6 H29.8 L20.2 16.4 V26 H15.2 V16.4 Z" fill="url(#fn)"/>
<text x="1.2" y="13.3" font-size="17.5" font-family="Liberation Serif" fill="#a2a2a2" stroke="#a2a2a2" stroke-width=".3">A</text>
<text x="1.6" y="28.5" font-size="17.5" font-family="Liberation Serif" fill="#a2a2a2" stroke="#a2a2a2" stroke-width=".3">Z</text></svg>
<div class="t" style="left:612.50px;top:104.84px;font-size:12px;color:#9c9c9c;transform:scaleX(0.9662);">Sort &amp;</div>
<div class="t" style="left:611.80px;top:117.84px;font-size:12px;color:#9c9c9c;transform:scaleX(0.9411);">Filter</div>
<svg style="left:640.1px;top:122.1px" width="5.0" height="3.0" viewBox="0 0 5 3"><path d="M0 0 H5 L2.5 3 Z" fill="#b5b5b5"/></svg>
<svg style="left:655px;top:71px" width="29" height="26" viewBox="0 0 29 26">
<defs><linearGradient id="bn" x1="0" x2="1"><stop offset="0" stop-color="#4f6fb4"/><stop offset=".3" stop-color="#9db6e6"/><stop offset=".6" stop-color="#5f80c6"/><stop offset="1" stop-color="#2c4688"/></linearGradient>
<linearGradient id="bv" x1="0" y1="0" x2="0" y2="1"><stop offset="0" stop-color="#fff" stop-opacity=".25"/><stop offset="1" stop-color="#000" stop-opacity=".18"/></linearGradient></defs>
<rect x="9" y="1" width="4.4" height="3.6" rx="1.6" fill="url(#bn)"/><rect x="16" y="1" width="4.4" height="3.6" rx="1.6" fill="url(#bn)"/>
<path d="M6.6 5.2 C 6.6 3.6, 14.2 3.6, 14.4 5.2 V13.5 H5.4 V8 Z" fill="url(#bn)"/>
<path d="M15 5.2 C 15 3.6, 22.8 3.6, 22.8 5.2 L 24 8 V13.5 H15 Z" fill="url(#bn)"/>
<path d="M6 7.5 H14.4 M15 7.5 H23.4 M5.6 10 H14.4 M15 10 H23.8" stroke="#3a5698" stroke-width=".7" opacity=".7"/>
<rect x="1" y="13" width="11.4" height="11.8" rx="2" fill="url(#bn)"/>
<rect x="16.6" y="13" width="11.4" height="11.8" rx="2" fill="url(#bn)"/>
<rect x="12" y="11.5" width="5" height="4.5" fill="#3d5aa0"/>
<rect x="1" y="13" width="11.4" height="11.8" rx="2" fill="url(#bv)"/><rect x="16.6" y="13" width="11.4" height="11.8" rx="2" fill="url(#bv)"/>
<path d="M1.4 22 H12 M17 22 H27.6" stroke="#2c4688" stroke-width=".8"/>
</svg>
<div class="t" style="left:653.50px;top:104.84px;font-size:12px;color:#2d2d2d;transform:scaleX(0.9922);">Find &amp;</div>
<div class="t" style="left:652.60px;top:117.84px;font-size:12px;color:#2d2d2d;transform:scaleX(0.8817);">Select</div>
<svg style="left:685.1px;top:122.3px" width="5.0" height="3.0" viewBox="0 0 5 3"><path d="M0 0 H5 L2.5 3 Z" fill="#444"/></svg>
<div class="abs" style="left:20px;top:154px;width:799px;height:20px;background:#fff;"></div>
<div class="abs" style="left:20px;top:174px;width:799px;height:1px;background:#a3a7ad;"></div>
<div class="abs" style="left:20px;top:175px;width:799px;height:3px;background:linear-gradient(to bottom,#fbfcfd,#e4e8f0);"></div>
<div class="t" style="left:82.80px;top:158.84px;font-size:12px;color:#000;transform:scaleX(1.0317);">I99</div>
<svg style="left:167.2px;top:163.2px" width="6.5" height="3.9000000000000004" viewBox="0 0 5 3"><path d="M0 0 H5 L2.5 3 Z" fill="#333"/></svg>
<div class="abs" style="left:179px;top:154px;width:86px;height:20px;background:linear-gradient(to bottom,#dfe2e7,#e6e8ec);border-radius:10px 0 0 10px;border:1px solid #b9bdc4;border-right:1px solid #b9bdc4"></div>
<div class="abs" style="left:186px;top:159px;width:9px;height:9px;border-radius:5px;background:radial-gradient(circle at 35% 35%,#f5f6f8,#b9bdc5)"></div>
<div class="t" style="left:246.50px;top:158.34px;font-size:14px;color:#3a3a3a;font-weight:bold;font-style:italic;font-family:'Liberation Serif',serif;">f</div>
<div class="t" style="left:252.00px;top:161.68px;font-size:10px;color:#3a3a3a;font-weight:bold;font-style:italic;font-family:'Liberation Serif',serif;">x</div>
<div class="abs" style="left:804px;top:154px;width:15px;height:20px;background:#e1e4e9;border-left:1px solid #c5c9cf"></div>
<svg style="left:807px;top:161px" width="9" height="6" viewBox="0 0 9 6"><path d="M1 1 L4.5 4.5 L8 1" fill="none" stroke="#555" stroke-width="1.8"/></svg>
<div class="abs" style="left:20px;top:178px;width:783px;height:510px;background:#99ccff;"></div>
<div class="abs" style="left:20px;top:178px;width:799px;height:1px;background:#8f949b;"></div>
<div class="abs" style="left:25px;top:184px;width:749.4px;height:33px;background:#000080;"></div>
<svg style="left:20px;top:179px" width="9" height="9" viewBox="0 0 9 9">
<path d="M1.6 7 V1 H6.4" fill="none" stroke="#7b3d0a" stroke-width="1.3"/>
<path d="M3.4 8 V3.6 H8" fill="none" stroke="#7b3d0a" stroke-width="1.6"/><rect x="4.9" y="5" width="3.2" height="3.2" fill="#ffff80"/></svg>
<div class="abs" style="left:28px;top:187px;width:28px;height:28px;background:#d6d6d6;border-top:1.6px solid #fff;border-left:1.6px solid #fff;border-right:2px solid #6a6a6a;border-bottom:2px solid #6a6a6a;box-shadow:inset -1px -1px 0 #a8a8a8"></div>
<div class="abs" style="left:57px;top:187px;width:28px;height:28px;background:#d6d6d6;border-top:1.6px solid #fff;border-left:1.6px solid #fff;border-right:2px solid #6a6a6a;border-bottom:2px solid #6a6a6a;box-shadow:inset -1px -1px 0 #a8a8a8"></div>
<svg style="left:30px;top:190px" width="23" height="22" viewBox="0 0 23 22">
<path d="M4.6 8 C 2 11, 1 15, 2.4 17.4" fill="none" stroke="#e0a030" stroke-width="1.3"/>
<path d="M4 12.2 C4 6.5, 8 3.2, 12.4 3.2 C 17 3.2, 20.5 6.5, 20.3 12.6 L 8.4 12.6 C 8.6 15.2, 10.4 16.4, 12.6 16.4 C 14.4 16.4, 15.6 15.6, 16.2 14.4 L 20 14.4 C 19 17.8, 16.2 19.8, 12.4 19.8 C 7.6 19.8, 4 16.8, 4 12.2 Z M 8.5 9.8 L 16 9.8 C 15.8 7.6, 14.4 6.4, 12.3 6.4 C 10.2 6.4, 8.8 7.6, 8.5 9.8 Z" fill="#1c5ce0" stroke="#0a2fb0" stroke-width=".7" fill-rule="evenodd"/>
<path d="M14 4.4 C 17 5, 19 7.4, 19.2 10.6" fill="none" stroke="#38b0f0" stroke-width="1.3"/>
<path d="M5.6 9 C7 5.6, 9.6 4.4, 12 4.2" fill="none" stroke="#6aa6ff" stroke-width="1"/>
<path d="M2.6 16.6 C 1.6 19.4, 4 20.4, 7.4 18.4" fill="none" stroke="#0a2fb0" stroke-width="1.5"/>
<path d="M13 3 C 16.5 0.8, 20.8 1, 20.2 4.6" fill="none" stroke="#2a7ae8" stroke-width="1.3"/>
</svg>
<div class="t" style="left:61.05px;top:187.30px;font-size:28px;color:#000;font-weight:bold;">?</div>
<div class="t" style="left:109.70px;top:194.00px;font-size:13px;color:#fff;transform:scaleX(1.0486);font-weight:bold;">Spur gearing, Helical gearing [mm/ISO]</div>
<div class="abs" style="left:25px;top:217px;width:749.4px;height:20.5px;background:#c0c0c0;"></div>
<div class="abs" style="left:25px;top:216.5px;width:749.4px;height:1px;background:#000066;"></div>
<div class="abs" style="left:502px;top:217px;width:1px;height:21px;background:#000;"></div>
<div class="abs" style="left:587px;top:217px;width:1px;height:21px;background:#000;"></div>
<div class="abs" style="left:672px;top:217px;width:1px;height:21px;background:#000;"></div>
<div class="abs" style="left:20px;top:237px;width:783px;height:1.3px;background:#555;"></div>
<div class="abs" style="left:25px;top:237px;width:749.4px;height:1.5px;background:#1a1a1a;"></div>
<div class="t" style="left:43.00px;top:223.00px;font-size:13px;color:#000;font-weight:bold;">i</div>
<div class="t" style="left:70.60px;top:223.00px;font-size:13px;color:#000;transform:scaleX(1.0445);font-weight:bold;">Calculation without errors.</div>
<div class="t" style="left:526.65px;top:221.00px;font-size:13px;color:#000;transform:scaleX(0.9344);font-weight:bold;">Pinion</div>
<div class="t" style="left:614.65px;top:221.00px;font-size:13px;color:#000;transform:scaleX(1.0222);font-weight:bold;">Gear</div>
<div class="abs" style="left:25px;top:240px;width:749.4px;height:20.4px;background:#ccffcc;"></div>
<div class="abs" style="left:25px;top:260.1px;width:749.4px;height:1.9px;background:#000;"></div>
<div class="t" style="left:40.20px;top:246.00px;font-size:13px;color:#000;transform:scaleX(1.0621);font-weight:bold;">3.0</div>
<div class="abs" style="left:72px;top:243px;width:13px;height:13px;background:#fff;border:1px solid #000"></div>
<div class="t" style="left:90.20px;top:246.00px;font-size:13px;color:#000;transform:scaleX(1.0713);font-weight:bold;">Parameters of the cutting tool and tooth profile</div>
<svg style="left:57px;top:240px" width="5" height="5" viewBox="0 0 5 5"><path d="M0 0 H5 V5 Z" fill="#ff0000"/></svg>
<div class="abs" style="left:25px;top:263.9px;width:749.4px;height:20.4px;background:#ccffcc;"></div>
<div class="abs" style="left:25px;top:284.0px;width:749.4px;height:1.9px;background:#000;"></div>
<div class="t" style="left:40.20px;top:270.00px;font-size:13px;color:#000;transform:scaleX(1.0621);font-weight:bold;">4.0</div>
<div class="abs" style="left:72px;top:267px;width:13px;height:13px;background:#fff;border:1px solid #000"></div>
<div class="t" style="left:90.20px;top:270.00px;font-size:13px;color:#000;transform:scaleX(1.0439);font-weight:bold;">Design of a module and geometry of toothing</div>
<svg style="left:57px;top:263.9px" width="5" height="5" viewBox="0 0 5 5"><path d="M0 0 H5 V5 Z" fill="#ff0000"/></svg>
<div class="abs" style="left:25px;top:287.7px;width:749.4px;height:20.4px;background:#ccffcc;"></div>
<div class="abs" style="left:25px;top:307.8px;width:749.4px;height:1.9px;background:#000;"></div>
<div class="t" style="left:40.20px;top:294.00px;font-size:13px;color:#000;transform:scaleX(1.0621);font-weight:bold;">5.0</div>
<div class="abs" style="left:72px;top:291px;width:13px;height:13px;background:#fff;border:1px solid #000"></div>
<div class="t" style="left:90.20px;top:294.00px;font-size:13px;color:#000;transform:scaleX(1.0430);font-weight:bold;">Correction of toothing (Addendum modification)</div>
<svg style="left:57px;top:287.7px" width="5" height="5" viewBox="0 0 5 5"><path d="M0 0 H5 V5 Z" fill="#ff0000"/></svg>
<div class="abs" style="left:25px;top:312px;width:37px;height:20.5px;background:#c0c0c0;"></div>
<div class="abs" style="left:62px;top:312px;width:37px;height:20.5px;background:#ededed;border-left:1px solid #fff;border-top:1px solid #fff;border-right:1.5px solid #8a8a8a;border-bottom:1.5px solid #8a8a8a"></div>
<div class="t" style="left:76.21px;top:316.15px;font-size:14px;color:#222;">+</div>
<div class="abs" style="left:99px;top:312px;width:675.4px;height:20.5px;background:#ffcc00;"></div>
<div class="abs" style="left:25px;top:332.2px;width:749.4px;height:1.8px;background:#000;"></div>
<div class="t" style="left:372.00px;top:318.00px;font-size:13px;color:#000;transform:scaleX(1.0198);font-weight:bold;">Results section</div>
<div class="abs" style="left:25px;top:334px;width:749.4px;height:19.6px;background:#ffff99;"></div>
<div class="t" style="left:40.20px;top:339.00px;font-size:13px;color:#000;transform:scaleX(1.0621);font-weight:bold;">6.0</div>
<div class="abs" style="left:72px;top:337px;width:13px;height:13px;background:#fff;border:1px solid #000"></div>
<svg style="left:74px;top:339px" width="10" height="10" viewBox="0 0 10 10"><path d="M1.2 4.6 L3.8 7.4 L8.4 1.6" fill="none" stroke="#000" stroke-width="1.7"/></svg>
<div class="t" style="left:90.20px;top:339.00px;font-size:13px;color:#000;font-weight:bold;">Basic dimensions of gearing</div>
<svg style="left:57px;top:334.2px" width="5" height="5" viewBox="0 0 5 5"><path d="M0 0 H5 V5 Z" fill="#ff0000"/></svg>
<div class="abs" style="left:24.5px;top:353.2px;width:750.2px;height:183.6px;background:#fff;border:1.4px solid #000"></div>
<div class="t" style="left:42.50px;top:550.00px;font-size:13px;color:#000;transform:scaleX(0.9127);">6.1</div>
<div class="t" style="left:70.20px;top:550.00px;font-size:13px;color:#000;transform:scaleX(0.9859);">Number of teeth Pinion / Gear</div>
<div class="t" style="left:482.80px;top:550.00px;font-size:13px;color:#000;">z</div>
<div class="t" style="left:537.77px;top:550.00px;font-size:13px;color:#000;">17</div>
<div class="t" style="left:622.97px;top:550.00px;font-size:13px;color:#000;">44</div>
<div class="t" style="left:42.50px;top:571.00px;font-size:13px;color:#000;transform:scaleX(0.9127);">6.2</div>
<div class="t" style="left:70.20px;top:571.00px;font-size:13px;color:#000;transform:scaleX(0.9918);">Face width (Pinion / Gear)</div>
<div class="t" style="left:482.07px;top:571.00px;font-size:13px;color:#000;">b</div>
<div class="t" style="left:534.15px;top:571.00px;font-size:13px;color:#000;">153</div>
<div class="t" style="left:619.35px;top:571.00px;font-size:13px;color:#000;">148</div>
<div class="t" style="left:697.30px;top:571.00px;font-size:13px;color:#000;transform:scaleX(1.0978);">[mm]</div>
<div class="t" style="left:42.50px;top:592.00px;font-size:13px;color:#000;transform:scaleX(0.9127);">6.3</div>
<div class="t" style="left:70.20px;top:592.00px;font-size:13px;color:#000;transform:scaleX(0.9788);">Normal module</div>
<div class="t" style="left:471.24px;top:592.00px;font-size:13px;color:#000;">mn</div>
<div class="t" style="left:580.37px;top:592.00px;font-size:13px;color:#000;">10</div>
<div class="t" style="left:697.30px;top:592.00px;font-size:13px;color:#000;transform:scaleX(1.0978);">[mm]</div>
<div class="t" style="left:42.50px;top:613.00px;font-size:13px;color:#000;transform:scaleX(0.9127);">6.4</div>
<div class="t" style="left:70.20px;top:613.00px;font-size:13px;color:#000;transform:scaleX(0.9882);">Transverse module</div>
<div class="t" style="left:474.86px;top:613.00px;font-size:13px;color:#000;">mt</div>
<div class="t" style="left:564.09px;top:613.00px;font-size:13px;color:#000;">10.0000</div>
<div class="t" style="left:697.30px;top:613.00px;font-size:13px;color:#000;transform:scaleX(1.0978);">[mm]</div>
<div class="t" style="left:42.50px;top:634.00px;font-size:13px;color:#000;transform:scaleX(0.9127);">6.5</div>
<div class="t" style="left:70.20px;top:634.00px;font-size:13px;color:#000;transform:scaleX(0.9806);">Circular pitch</div>
<div class="t" style="left:482.07px;top:634.00px;font-size:13px;color:#000;">p</div>
<div class="t" style="left:567.71px;top:634.00px;font-size:13px;color:#000;">31.416</div>
<div class="t" style="left:697.30px;top:634.00px;font-size:13px;color:#000;transform:scaleX(1.0978);">[mm]</div>
<div class="t" style="left:42.50px;top:655.00px;font-size:13px;color:#000;transform:scaleX(0.9127);">6.6</div>
<div class="t" style="left:70.20px;top:655.00px;font-size:13px;color:#000;transform:scaleX(0.9955);">Transverse circular pitch</div>
<div class="t" style="left:478.46px;top:655.00px;font-size:13px;color:#000;">pt</div>
<div class="t" style="left:567.71px;top:655.00px;font-size:13px;color:#000;">31.416</div>
<div class="t" style="left:697.30px;top:655.00px;font-size:13px;color:#000;transform:scaleX(1.0978);">[mm]</div>
<div class="t" style="left:42.50px;top:676.00px;font-size:13px;color:#000;transform:scaleX(0.9127);">6.7</div>
<div class="t" style="left:70.20px;top:676.00px;font-size:13px;color:#000;transform:scaleX(0.9743);">Base circular pitch</div>
<div class="t" style="left:471.22px;top:676.00px;font-size:13px;color:#000;">ptb</div>
<div class="t" style="left:567.71px;top:676.00px;font-size:13px;color:#000;">29.521</div>
<div class="t" style="left:697.30px;top:676.00px;font-size:13px;color:#000;transform:scaleX(1.0978);">[mm]</div>
<div class="abs" style="left:502px;top:543px;width:171px;height:1.2px;background:#000;"></div>
<div class="abs" style="left:502px;top:564.2px;width:171px;height:1.2px;background:#000;"></div>
<div class="abs" style="left:502px;top:585.2px;width:171px;height:1.2px;background:#000;"></div>
<div class="abs" style="left:502px;top:606.2px;width:171px;height:1.2px;background:#000;"></div>
<div class="abs" style="left:502px;top:627.2px;width:171px;height:1.2px;background:#000;"></div>
<div class="abs" style="left:502px;top:648.2px;width:171px;height:1.2px;background:#000;"></div>
<div class="abs" style="left:502px;top:669.2px;width:171px;height:1.2px;background:#000;"></div>
<div class="abs" style="left:502px;top:543px;width:1.2px;height:145px;background:#000;"></div>
<div class="abs" style="left:672.3px;top:543px;width:1.2px;height:145px;background:#000;"></div>
<div class="abs" style="left:587.2px;top:543px;width:1.2px;height:42px;background:#000;"></div>
<div class="t" style="left:564.20px;top:568.52px;font-size:21px;color:rgba(255,255,255,.5);transform:scaleX(1.0761);font-family:'Liberation Serif',serif;text-shadow:0 1px 1px rgba(90,110,140,.35);">SOFTPEDIA</div>
<div class="t" style="left:687.00px;top:567.07px;font-size:7px;color:rgba(255,255,255,.6);">™</div>
<div class="t" style="left:585.90px;top:596.53px;font-size:10px;color:rgba(255,255,255,.42);transform:scaleX(0.8680);font-weight:bold;">www.softpedia.com</div>
<div class="abs" style="left:803px;top:179px;width:16px;height:509px;background:linear-gradient(to right,#d9dcdf,#e6e8ea 40%,#e2e4e7);"></div>
<svg style="left:806px;top:185px" width="10" height="6" viewBox="0 0 10 6"><path d="M0 5.5 L5 0.5 L10 5.5 Z" fill="#4f4f4f"/></svg>
<svg style="left:806px;top:677px" width="10" height="6" viewBox="0 0 10 6"><path d="M0 0.5 L5 5.5 L10 0.5 Z" fill="#4f4f4f"/></svg>
<div class="abs" style="left:803.5px;top:223px;width:14.5px;height:16.5px;background:linear-gradient(to right,#fafbfc,#e3e5e9);border:1px solid #9a9ea6;border-radius:2px;box-shadow:inset 0 0 0 1px #fff"></div>
<div class="abs" style="left:807px;top:227.5px;width:8px;height:1px;background:#8a8d93;"></div>
<div class="abs" style="left:807px;top:229.9px;width:8px;height:1px;background:#8a8d93;"></div>
<div class="abs" style="left:807px;top:232.3px;width:8px;height:1px;background:#8a8d93;"></div>
<div class="abs" style="left:807px;top:234.7px;width:8px;height:1px;background:#8a8d93;"></div>
<svg style="left:0;top:0" width="847" height="754" viewBox="0 0 847 754">
<defs>
<pattern id="hat" width="2.3" height="2.3" patternUnits="userSpaceOnUse" patternTransform="rotate(-45)"><rect width="2.3" height="2.3" fill="#fafafa"/><rect width="2.3" height="0.9" fill="#b4b4b4"/></pattern>
<clipPath id="gc"><rect x="26" y="355" width="748" height="181"/></clipPath>
<marker id="ah" viewBox="0 0 14 6" refX="14" refY="3" markerWidth="14" markerHeight="6" orient="auto" markerUnits="userSpaceOnUse"><path d="M0 0.2 L14 3 L0 5.8 Z" fill="#0000ff"/></marker>
<marker id="ah2" viewBox="0 0 12 5" refX="12" refY="2.5" markerWidth="12" markerHeight="5" orient="auto" markerUnits="userSpaceOnUse"><path d="M0 0 L12 2.5 L0 5 Z" fill="none" stroke="#0000ff" stroke-width=".9"/></marker>
</defs>
<g clip-path="url(#gc)" fill="none" stroke-width="1">
<path d="M73 421.2 H92.4 L102.8 449.6 C105 458 105.5 466 106.7 471.6 C108 478 110 483 116 486 C100 482.8 70 482.4 50 485.2 C55 483 58 478 58.8 471.6 C60 462 61 455 62.7 449.6 Z" fill="url(#hat)" stroke="none"/>
<path d="M32.4 426.3 A 262.1 262.1 0 0 1 192.9 445.4" stroke="#808080"/>
<path d="M32.4 489.7 A 186.4 186.4 0 0 1 178.5 507.5" stroke="#808080"/>
<path d="M27.2 472 L48 474.2 C 53 468 60 446 67.9 425 C 69.5 419.5 71 417 75 415.2 C 80 413.8 87 413.8 91 415.5 C 95 417.5 96.3 421 97.6 426.3 C 103 444 110 463 117.8 474.2 L139 471.6 C 141.5 470 141.8 468.5 142.2 465 C 145 450 146.2 430 148 414.7 C 149.5 409.5 152 407.4 156 406 C 161 404.6 167 404.8 171 407 C 176.5 410.5 180 418 182.5 426.3" stroke="#000"/>
<path d="M73 421.2 H92.4 M73 421.2 C 69 432 64.5 443 62.7 449.6 C 60.5 458 59.8 466 58.8 471.6 C 58 478 55 483 47 485.4 M92.4 421.2 C 96.5 432 101 443 102.8 449.6 C 105 458 105.6 466 106.7 471.6 C 107.8 478 110.5 483.5 118 485.6" stroke="#000"/>
<g stroke="#ff0000"><path d="M29.8 445.7 L53.6 447.3 M31.6 453.5 L53.6 450.4 M64 447.6 h4 M113.5 447 h3.5 M113.5 450 h3 M128 446.2 L153.2 441.8 M128 453.5 L148 457.4 M159.8 461.6 l2.4 .9 M173.7 467.1 L192.3 476.7"/><path d="M80 448 H102.8" stroke-width="1.6"/></g>
<g stroke="#0000ff">
<path d="M33.8 387.3 H128 M61.2 383 V453.5 M104.6 383 V449.6"/>
<path d="M47 387.5 H61.4" marker-end="url(#ah)"/><path d="M118 387.5 H104.6" marker-end="url(#ah)"/>
<path d="M47.2 408.2 H115.7 M73 404 V421.2 M90.4 404 V421.2"/>
<path d="M61 408.2 H73" marker-end="url(#ah)"/><path d="M104 408.2 H90.4" marker-end="url(#ah)"/>
<path d="M141.6 373.8 V447 M73 414.2 H145.5 M90 421.2 H145.5"/>
<path d="M141.6 400 V414.2" marker-end="url(#ah)"/><path d="M141.6 435.4 V421.2" marker-end="url(#ah)"/>
<path d="M193.8 401.7 L151.5 535.4 M188 445.4 L179.4 469 M168.8 465.8 L158.3 490.2"/>
</g>
<path d="M179.4 440.2 L182.7 426.0 L186.5 427.4 Z" fill="#0000ff" stroke="#0000ff" stroke-width=".5"/>
<path d="M179.6 468.6 L181.9 456.3 L185.7 457.7 Z" fill="#0000ff" stroke="#0000ff" stroke-width=".5"/>
<path d="M168.8 465.8 L165.3 479.5 L161.7 477.9 Z" fill="#0000ff" stroke="#0000ff" stroke-width=".5"/>
<path d="M166.0 500.4 L162.7 514.7 L159.7 513.7 Z" fill="#0000ff" stroke="#0000ff" stroke-width=".5"/>
<path d="M166.4 466.4 L171.8 467.8" stroke="#000"/>
<path d="M251.2 399.6 L270 392.3 C 277 398 281 402 284.3 406.2 C 290 413 293 417 295.9 421 C 299 428 301 434 305 439.3 C 309 443.5 319 444 324 440 C 329 436 330.4 433 330.6 429.3 C 330.6 424 331 418 331.6 412.8 C 333 405 335 399 337.2 393 C 340 387 342.5 383 345.5 378.8 H364.3 C 367.5 383 369.6 387 371.9 393 C 374.4 399 376 405 376.9 412.8 C 377.6 418 377.7 424 377.9 429.3 C 378.3 433 379.5 436 383.5 440 C 388.5 444 398.5 443.5 403.3 439.3 C 407 434 409 428 411.6 421 C 415 417 420 411.5 424.8 406.2 C 429 402 434 397 439.7 392.3 L455.2 399.6 C 457.5 407 457.6 415 457.2 422.7 C 455 433 451.5 444 449.6 452.5 C 449.5 459 451.5 464.5 454.5 469 C 425 447 385 439.3 353.7 439.3 C 322 439.3 283 447.5 252.9 469 C 256.5 466.5 258 464 257.9 462.4 V449.2 C 254 443 251 436 250.2 429.3 Z" fill="url(#hat)" stroke="none"/>
<path d="M213.9 420 A 234.9 234.9 0 0 1 345.5 378.8" stroke="#808080"/>
<path d="M232.4 481.6 A 195.5 195.5 0 0 1 471 478.3" stroke="#808080"/>
<path d="M251.2 399.6 L270 392.3 C 277 398 281 402 284.3 406.2 C 290 413 293 417 295.9 421 C 299 428 301 434 305 439.3 C 309 443.5 319 444 324 440 C 329 436 330.4 433 330.6 429.3 C 330.6 424 331 418 331.6 412.8 C 333 405 335 399 337.2 393 C 340 387 342.5 383 345.5 378.8 H364.3 C 367.5 383 369.6 387 371.9 393 C 374.4 399 376 405 376.9 412.8 C 377.6 418 377.7 424 377.9 429.3 C 378.3 433 379.5 436 383.5 440 C 388.5 444 398.5 443.5 403.3 439.3 C 407 434 409 428 411.6 421 C 415 417 420 411.5 424.8 406.2 C 429 402 434 397 439.7 392.3 L455.2 399.6 C 457.5 407 457.6 415 457.2 422.7 C 455 433 451.5 444 449.6 452.5 C 449.5 459 451.5 464.5 454.5 469" stroke="#000"/>
<path d="M251.2 399.6 C 250 410 249.8 420 250.2 429.3 C 251 436 254 443 257.9 449.2 V462.4 C 257.5 465 255.5 467 252.9 469" stroke="#000" stroke-dasharray="3 1"/>
<path d="M216.5 467.4 A 220.6 220.6 0 0 1 480 459" stroke="#0000ff"/>
<g stroke="#ff0000"><path d="M214.9 452.5 L238 437.6 M261 425.4 L283 417 M287 415 L295.9 412.8 M307.4 410.5 L329 406.9 M340 405.3 h3 M353.7 406.2 L375.2 406.9 M388 408 h3 M401.7 410.5 L424.8 416.1 M436 419.6 l2.5 .9 M448 426.7 L473.7 439.3"/>
<path d="M353.7 373 V407.9 M353.7 434.3 V457.4 M353.7 467.5 v2 M353.7 480.6 V517"/></g>
<g stroke="#0000ff">
<path d="M293.6 517 L237 406.9" marker-end="url(#ah)"/>
<path d="M315.7 517 L284.3 416.1" marker-end="url(#ah)"/>
<path d="M390 517 L410.9 448.5" marker-end="url(#ah2)"/>
<path d="M432.4 525.9 L471.7 455.8" marker-end="url(#ah2)"/>
</g>
<g stroke="#ff0000"><path d="M599.2 361 V417.7 M599.2 423.5 v2 M599.2 432 V470 M599.2 478.5 v2 M599.2 488 V536"/>
<path d="M487.6 414.4 L505.5 420 M517.5 423.2 l2.6 .5 M531 425.9 L553.7 429.5 M565 431.2 l3 .3 M645 429.6 l-2.6 .3 M659.3 427.3 Q 670 426 679.4 423.5 M690.8 420.3 l2.6 -.8 M704.9 416.1 L735.6 404"/>
<path d="M488.5 455.2 L506.4 448.4 M518.4 445 l2.6 -.8 M532 440.8 L553.7 436.7 M565 435 l3 -.4 M616 434.2 l5.7 .4 M633.5 435 l2.8 .4 M647.6 437.3 L668.8 441.1 M680.2 444.3 l2.6 .8 M694.3 449.6 L714.4 457.5 M725 461.8 l2.4 1 M738.4 468.7 L756.9 479.3"/>
<path d="M579.2 432.4 H589.6 M604.7 432.6 H633" stroke-width="1.7"/></g>
<g stroke="#0000ff">
<path d="M486.5 432.5 H755.8"/>
<path d="M478 388.4 A 336.3 336.3 0 0 0 756.9 374.3"/>
<path d="M480.2 478.1 A 267.3 267.3 0 0 1 753.7 498.2"/>
<path d="M506.4 465.8 L599.2 432.4 L766.4 367.9"/>
<path d="M487.6 414 L532.2 534.8"/>
<path d="M656.7 534.8 L672.4 475.5"/>
<path d="M506.4 466 L525.3 460.6 C 527 468 524.5 476 514 483.5 Z" stroke-width="1.9" stroke-linejoin="round"/>
<path d="M515.6 472.8 h2.4 M516.8 471.6 v2.4" stroke-width=".8"/>
<path d="M712.3 355.2 A 128.5 128.5 0 0 1 731.4 468.3"/>
</g>
<path d="M675.6 462.8 L673.6 477.6 L670.4 476.8 Z" fill="none" stroke="#0000ff" stroke-width=".9"/>
<path d="M727.2 383.8 L718.5 369.8 L721.9 368.2 Z" fill="none" stroke="#0000ff" stroke-width=".9"/>
<path d="M736.3 433.7 L736.5 451.5 L732.7 451.1 Z" fill="#0000ff" stroke="#0000ff" stroke-width=".5"/>
<path d="M497.0 390.4 C496.6 392.8 494.9 397.5 494.7 404.6 C494.5 411.7 495.0 425.3 496.0 432.9 C497.0 440.4 499.1 444.2 500.8 449.9 C502.5 455.6 504.4 461.9 506.4 466.9 C508.4 471.9 509.9 476.9 513.0 480.1 C516.1 483.3 521.0 485.9 525.3 486.2 C529.6 486.5 535.1 484.6 538.6 482.0 C542.1 479.4 544.8 475.2 546.1 470.7 C547.4 466.2 546.5 459.7 546.4 455.0 C546.3 450.3 545.4 447.2 545.7 442.3 C546.0 437.4 546.2 432.5 548.0 425.3 C549.8 418.1 554.0 404.6 556.5 398.9 C559.0 393.2 560.1 393.0 563.1 391.3 C566.1 389.6 570.6 388.7 574.4 388.9 C578.2 389.1 582.6 390.0 585.8 392.3 C588.9 394.6 591.7 398.4 593.3 402.7 C594.9 406.9 594.6 412.9 595.6 417.8 C596.6 422.7 597.6 425.7 599.0 432.0 C600.4 438.3 602.1 449.8 603.7 455.6 C605.3 461.4 605.7 463.5 608.4 466.9 C611.1 470.3 616.0 474.6 619.8 476.0 C623.6 477.4 627.5 476.7 631.1 475.4 C634.7 474.1 638.5 472.5 641.2 468.3 C643.9 464.1 645.4 457.7 647.5 450.0 C649.6 442.3 652.8 431.3 654.0 422.0 C655.2 412.7 653.2 400.6 654.5 394.4 C655.8 388.1 658.7 386.7 662.0 384.5 C665.3 382.3 670.2 381.1 674.1 381.3 C678.0 381.5 682.5 383.3 685.5 385.5 C688.5 387.7 689.8 389.7 692.1 394.4 C694.5 399.1 697.8 405.7 699.6 413.5 C701.5 421.3 703.0 431.6 703.2 441.1 C703.4 450.7 701.4 463.7 700.6 470.8 C699.8 477.9 697.8 479.0 698.5 483.6 C699.2 488.2 701.7 495.0 704.9 498.4 C708.1 501.8 713.0 504.0 717.6 503.7 C722.2 503.4 727.9 500.0 732.5 496.3 C737.1 492.6 741.0 485.6 745.2 481.4 C749.4 477.2 755.8 473.0 757.9 471.3" stroke="#000"/>
<path d="M485.3 442.0 L498.9 454.6" stroke="#000"/>
<path d="M498.9 454.6 C499.5 455.7 501.2 458.9 502.5 461.0 C503.8 463.1 505.8 465.9 506.4 466.9" stroke="#000"/>
<path d="M502.7 455.2 L524.4 459.0 L536.7 444.2 L548.0 427.2 L557.4 401.2 L581.0 398.9 L587.7 406.4 L599.0 432.0 L616.0 466.0 L640.0 464.0 L641.2 464.5 L647.6 445.4 L659.3 425.2 L676.2 408.2 L698.5 414.0 L704.9 419.5 L731.4 444.3 L754.1 435.8 L754.1 428.0" stroke="#000" stroke-linejoin="round"/>
</g>
<text transform="translate(76.70,382.60) scale(0.552,1)" font-family="Liberation Sans" font-size="20.14" fill="#0000ff" stroke="#0000ff" stroke-width="0.35">S</text>
<text transform="translate(84.80,382.60) scale(0.723,1)" font-family="Liberation Sans" font-size="16.31" fill="#0000ff" stroke="#0000ff" stroke-width="0.35">t</text>
<text transform="translate(75.90,403.90) scale(0.556,1)" font-family="Liberation Sans" font-size="20.29" fill="#0000ff" stroke="#0000ff" stroke-width="0.35">S</text>
<text transform="translate(84.00,403.90) scale(0.595,1)" font-family="Liberation Sans" font-size="15.00" fill="#0000ff" stroke="#0000ff" stroke-width="0.35">a</text>
<text transform="translate(125.90,410.50) scale(0.651,1)" font-family="Liberation Sans" font-size="26.11" fill="#0000ff" stroke="#0000ff" stroke-width="0.35">c</text>
<text transform="translate(155.80,453.70) scale(0.623,1)" font-family="Liberation Sans" font-size="26.62" fill="#0000ff" stroke="#0000ff" stroke-width="0.35">h</text>
<text transform="translate(165.60,453.70) scale(0.613,1)" font-family="Liberation Sans" font-size="15.74" fill="#0000ff" stroke="#0000ff" stroke-width="0.35">a</text>
<text transform="translate(176.20,499.80) scale(0.572,1)" font-family="Liberation Sans" font-size="26.48" fill="#0000ff" stroke="#0000ff" stroke-width="0.35">h</text>
<text transform="translate(185.20,499.80) scale(0.986,1)" font-family="Liberation Sans" font-size="17.38" fill="#0000ff" stroke="#0000ff" stroke-width="0.35">f</text>
<text transform="translate(255.90,494.60) scale(0.642,1)" font-family="Liberation Sans" font-size="24.41" fill="#0000ff" stroke="#0000ff" stroke-width="0.35">d</text>
<text transform="translate(265.50,494.60) scale(0.693,1)" font-family="Liberation Sans" font-size="17.78" fill="#0000ff" stroke="#0000ff" stroke-width="0.35">a</text>
<text transform="translate(305.50,470.50) scale(0.580,1)" font-family="Liberation Sans" font-size="27.03" fill="#0000ff" stroke="#0000ff" stroke-width="0.35">d</text>
<text transform="translate(383.40,481.60) scale(0.684,1)" font-family="Liberation Sans" font-size="23.72" fill="#0000ff" stroke="#0000ff" stroke-width="0.35">d</text>
<text transform="translate(392.90,481.60) scale(0.863,1)" font-family="Liberation Sans" font-size="19.45" fill="#0000ff" stroke="#0000ff" stroke-width="0.35">f</text>
<text transform="translate(424.30,501.70) scale(0.601,1)" font-family="Liberation Sans" font-size="26.07" fill="#0000ff" stroke="#0000ff" stroke-width="0.35">d</text>
<text transform="translate(434.20,501.70) scale(0.797,1)" font-family="Liberation Sans" font-size="16.97" fill="#0000ff" stroke="#0000ff" stroke-width="0.35">b</text>
<text transform="translate(638.40,518.40) scale(0.588,1)" font-family="Liberation Sans" font-size="27.86" fill="#0000ff" stroke="#0000ff" stroke-width="0.35">d</text>
<text transform="translate(648.50,518.40) scale(0.765,1)" font-family="Liberation Sans" font-size="17.66" fill="#0000ff" stroke="#0000ff" stroke-width="0.35">b</text>
<text transform="translate(746.30,414.60) scale(0.839,1)" font-family="Liberation Sans" font-size="41.30" fill="#0000ff" stroke="#0000ff" stroke-width="0.5">α</text>
</svg>
<div class="abs" style="left:20px;top:688px;width:783px;height:16px;background:linear-gradient(to bottom,#d2d6dc,#dfe2e7);"></div>
<div class="abs" style="left:20px;top:687.6px;width:783px;height:1px;background:#9aa0a8;"></div>
<div class="abs" style="left:803px;top:688px;width:16px;height:16px;background:#dde1ea;"></div>
<svg style="left:24px;top:690px" width="56" height="12" viewBox="0 0 56 12"><g fill="#4a4d52">
<rect x="1.3" y="2" width="1.4" height="8"/><path d="M8 2 V10 L3.5 6 Z"/>
<path d="M22.5 2 V10 L18 6 Z"/>
<path d="M32.5 2 V10 L37 6 Z"/>
<path d="M46.5 2 V10 L51 6 Z"/><rect x="51.6" y="2" width="1.4" height="8"/></g></svg>
<svg style="left:80px;top:688px" width="420" height="17" viewBox="0 0 420 17">
<path d="M2.5 0 V15.5 H81.8 L93.4 0 Z" fill="#fff" stroke="#8f949c" stroke-width="1"/>
<g fill="none" stroke="#8f949c"><path d="M81.8 15.5 H172.6 L184.6 0"/><path d="M172.6 15.5 H237.7 L250 0"/><path d="M237.7 15.5 H292.2 L304.5 0"/><path d="M292.2 15.5 H355.7 L367.6 0"/><path d="M355.7 15.5 H395.4 L408 0"/></g>
<g fill="#9aa0a8"><path d="M79 16.5 L82 12.5 V16.5 Z"/><path d="M170 16.5 L173 12.5 V16.5 Z"/><path d="M235 16.5 L238 12.5 V16.5 Z"/><path d="M289.6 16.5 L292.6 12.5 V16.5 Z"/><path d="M353 16.5 L356 12.5 V16.5 Z"/></g>
<rect x="410.4" y="1.5" width="6.4" height="13" fill="#f6f7f9" stroke="#8b9097" stroke-width="1"/><path d="M413.6 4.5 V11.5" stroke="#8b9097" stroke-width="1"/>
</svg>
<div class="t" style="left:92.40px;top:690.42px;font-size:12.5px;color:#3a3a3a;transform:scaleX(0.9796);font-weight:bold;">Calculation</div>
<div class="t" style="left:180.60px;top:690.84px;font-size:12px;color:#555a62;transform:scaleX(0.9860);">Coordinates</div>
<div class="t" style="left:269.00px;top:690.84px;font-size:12px;color:#555a62;transform:scaleX(0.9698);">Material</div>
<div class="t" style="left:332.60px;top:690.84px;font-size:12px;color:#555a62;transform:scaleX(0.9715);">Tables</div>
<div class="t" style="left:387.00px;top:690.84px;font-size:12px;color:#555a62;transform:scaleX(1.0159);">Options</div>
<div class="t" style="left:449.30px;top:690.84px;font-size:12px;color:#555a62;transform:scaleX(0.8750);">DXF</div>
<svg style="left:502px;top:691px" width="6" height="10" viewBox="0 0 6 10"><path d="M5.5 0 V10 L0.5 5 Z" fill="#4a4d52"/></svg>
<svg style="left:792px;top:691px" width="6" height="10" viewBox="0 0 6 10"><path d="M0.5 0 V10 L5.5 5 Z" fill="#4a4d52"/></svg>
<div class="abs" style="left:553.5px;top:688.5px;width:56px;height:15px;background:linear-gradient(to bottom,#fbfcfd,#e0e3e8);border:1px solid #9a9ea6;border-radius:2px;box-shadow:inset 0 0 0 1px #fff"></div>
<div class="abs" style="left:577.0px;top:692.5px;width:1px;height:7px;background:#8a8d93;"></div>
<div class="abs" style="left:579.4px;top:692.5px;width:1px;height:7px;background:#8a8d93;"></div>
<div class="abs" style="left:581.8px;top:692.5px;width:1px;height:7px;background:#8a8d93;"></div>
<div class="abs" style="left:584.2px;top:692.5px;width:1px;height:7px;background:#8a8d93;"></div>
<div class="abs" style="left:20px;top:704px;width:799px;height:22px;background:linear-gradient(to bottom,#9a9ea4 0,#f3f4f6 1.5px,#e6e8eb 30%,#cfd2d7 60%,#c3c6cc 100%);"></div>
<div class="t" style="left:28.60px;top:709.84px;font-size:12px;color:#4a4a4a;transform:scaleX(0.8793);">Ready</div>
<div class="abs" style="left:68px;top:707px;width:1px;height:17px;background:#a6aab0;"></div>
<div class="abs" style="left:69px;top:707px;width:1px;height:17px;background:#f4f5f7;"></div>
<div class="abs" style="left:564px;top:707px;width:1px;height:17px;background:#a6aab0;"></div>
<div class="abs" style="left:565px;top:707px;width:1px;height:17px;background:#f4f5f7;"></div>
<div class="abs" style="left:567.5px;top:706.5px;width:17px;height:18px;border:1px solid #d9a43a;border-radius:2px;background:linear-gradient(to bottom,#fde9a8,#f9cf63 50%,#fbd978)"></div>
<svg style="left:570px;top:709.5px" width="12" height="12" viewBox="0 0 12 12"><rect x="0.5" y="0.5" width="11" height="11" fill="#fff" stroke="#5d6168"/><path d="M0.5 4 H11.5 M0.5 7.7 H11.5 M4.2 0.5 V11.5 M7.9 0.5 V11.5" stroke="#5d6168" stroke-width=".9"/></svg>
<svg style="left:589px;top:709px" width="13" height="13" viewBox="0 0 13 13"><rect x="0.5" y="0.5" width="12" height="12" fill="#e9ebee" stroke="#5d6168"/><rect x="3" y="3" width="7" height="7" fill="#fff" stroke="#5d6168" stroke-width=".9"/><path d="M4.5 5.5 H8.5 M4.5 7.5 H8.5" stroke="#9b9fa6" stroke-width=".8"/></svg>
<svg style="left:607px;top:709px" width="14" height="13" viewBox="0 0 14 13"><rect x="0.5" y="0.5" width="13" height="12" fill="#f4f5f7" stroke="#5d6168"/><path d="M5 0.5 V8 H13.5" fill="none" stroke="#5d6168" stroke-width="1.2"/><rect x="1" y="8.5" width="12" height="3.5" fill="#8b9097" opacity=".6"/></svg>
<div class="t" style="left:633.00px;top:709.84px;font-size:12px;color:#333;transform:scaleX(0.8733);">100%</div>
<div class="abs" style="left:684px;top:715px;width:100px;height:1px;background:#8b8f96;"></div>
<div class="abs" style="left:684px;top:716px;width:100px;height:1px;background:#f2f3f5;"></div>
<svg style="left:667.8px;top:706.5px" width="17" height="17" viewBox="0 0 17 17"><circle cx="8.5" cy="8.5" r="7.6" fill="#f4f5f7" stroke="#7d8188" stroke-width="1.1"/><circle cx="8.5" cy="8.5" r="6.3" fill="none" stroke="#fff" stroke-width=".8"/>
<path d="M4.8 8.5 H12.2" stroke="#4a4d52" stroke-width="1.8"/></svg>
<svg style="left:783.5px;top:706.5px" width="17" height="17" viewBox="0 0 17 17"><circle cx="8.5" cy="8.5" r="7.6" fill="#f4f5f7" stroke="#7d8188" stroke-width="1.1"/><circle cx="8.5" cy="8.5" r="6.3" fill="none" stroke="#fff" stroke-width=".8"/>
<path d="M4.8 8.5 H12.2 M8.5 4.8 V12.2" stroke="#4a4d52" stroke-width="1.8"/></svg>
<svg style="left:730px;top:707.5px" width="11" height="15" viewBox="0 0 11 15"><path d="M1 0.8 H10 V9 L5.5 14 L1 9 Z" fill="#eef0f3" stroke="#70747b" stroke-width="1"/><path d="M2.2 2 H8.8 V8.5" fill="none" stroke="#fff" stroke-width=".8"/></svg>
<svg style="left:807px;top:714px" width="12" height="12" viewBox="0 0 12 12"><g fill="#9ba4b4"><rect x="8.5" y="0.5" width="2" height="2"/><rect x="4.5" y="4.5" width="2" height="2"/><rect x="8.5" y="4.5" width="2" height="2"/><rect x="0.5" y="8.5" width="2" height="2"/><rect x="4.5" y="8.5" width="2" height="2"/><rect x="8.5" y="8.5" width="2" height="2"/></g></svg>
</body>
</html>
